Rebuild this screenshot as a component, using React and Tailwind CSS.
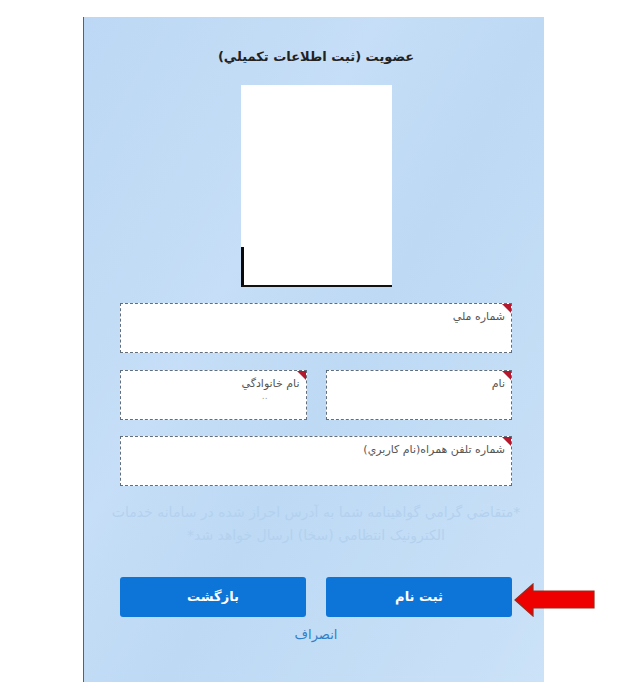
import React from "react";

function Field({ label, className = "", extra }) {
  return (
    <div className={"relative bg-white border border-dashed border-[#5f6f80] h-[50px] " + className}>
      <div className="absolute top-0 right-0 w-0 h-0 border-t-[9px] border-t-[#b3182c] border-l-[9px] border-l-transparent"></div>
      <div className="pr-[6px] pt-[5px] text-[11px] leading-[16px] text-[#555]">{label}</div>
      {extra}
    </div>
  );
}

export default function App() {
  return (
    <div className="w-[625px] h-[699px] bg-white relative" style={{ fontFamily: '"DejaVu Sans", "Noto Sans", sans-serif' }}>
      <div className="pt-[17px] pl-[83px]">
        <div
          dir="rtl"
          className="w-[461px] h-[665px] border-l border-l-[#3d6a86] pr-[32px] pl-[36px] flex flex-col bg-[linear-gradient(120deg,#bcd8f4_0%,#c6def7_35%,#bdd9f4_55%,#cbe2f8_100%)]"
        >
          <div className="pt-[30px] text-center text-[13px] leading-[20px] font-bold text-[#222]">
            عضويت (ثبت اطلاعات تکميلي)
          </div>
          <div className="mt-[18px] flex justify-center">
            <div className="relative w-[151px] h-[202px] bg-white border-b-2 border-b-[#111]">
              <div className="absolute left-0 bottom-0 w-[3px] h-[38px] bg-[#0a0a0a]"></div>
            </div>
          </div>
          <Field label="شماره ملي" className="mt-[16px] h-[49px]" />
          <div className="mt-[17px] grid grid-cols-2 gap-[19px]">
            <Field label="نام" />
            <Field
              label="نام خانوادگي"
              extra={<div className="pr-[38px] text-[9px] leading-[8px] text-[#999]">..</div>}
            />
          </div>
          <Field label="شماره تلفن همراه(نام کاربري)" className="mt-[16px]" />
          <div className="mt-[15px] -mx-[14px] whitespace-nowrap text-center text-[14px] leading-[23px] text-[#b3d1ef]">
            *متقاضي گرامي گواهينامه شما به آدرس احراز شده در سامانه خدمات
            <br />
            الکترونيک انتظامي (سخا) ارسال خواهد شد*
          </div>
          <div className="mt-[30px] grid grid-cols-2 gap-[20px]">
            <button className="h-[40px] rounded-[3px] bg-[#0d74d8] text-white text-[13px] font-bold">ثبت نام</button>
            <button className="h-[40px] rounded-[3px] bg-[#0d74d8] text-white text-[13px] font-bold">بازگشت</button>
          </div>
          <div className="mt-[8px] text-center text-[13px] leading-[20px] text-[#2f80c8]">انصراف</div>
        </div>
      </div>
      <svg className="absolute left-[514px] top-[583px]" width="82" height="34" viewBox="0 0 82 34">
        <polygon
          points="1,17 19,1 19,8 80,8 80,25 19,25 19,33"
          fill="#ee0000"
          stroke="#9a2a1a"
          strokeWidth="1.2"
        />
      </svg>
    </div>
  );
}
